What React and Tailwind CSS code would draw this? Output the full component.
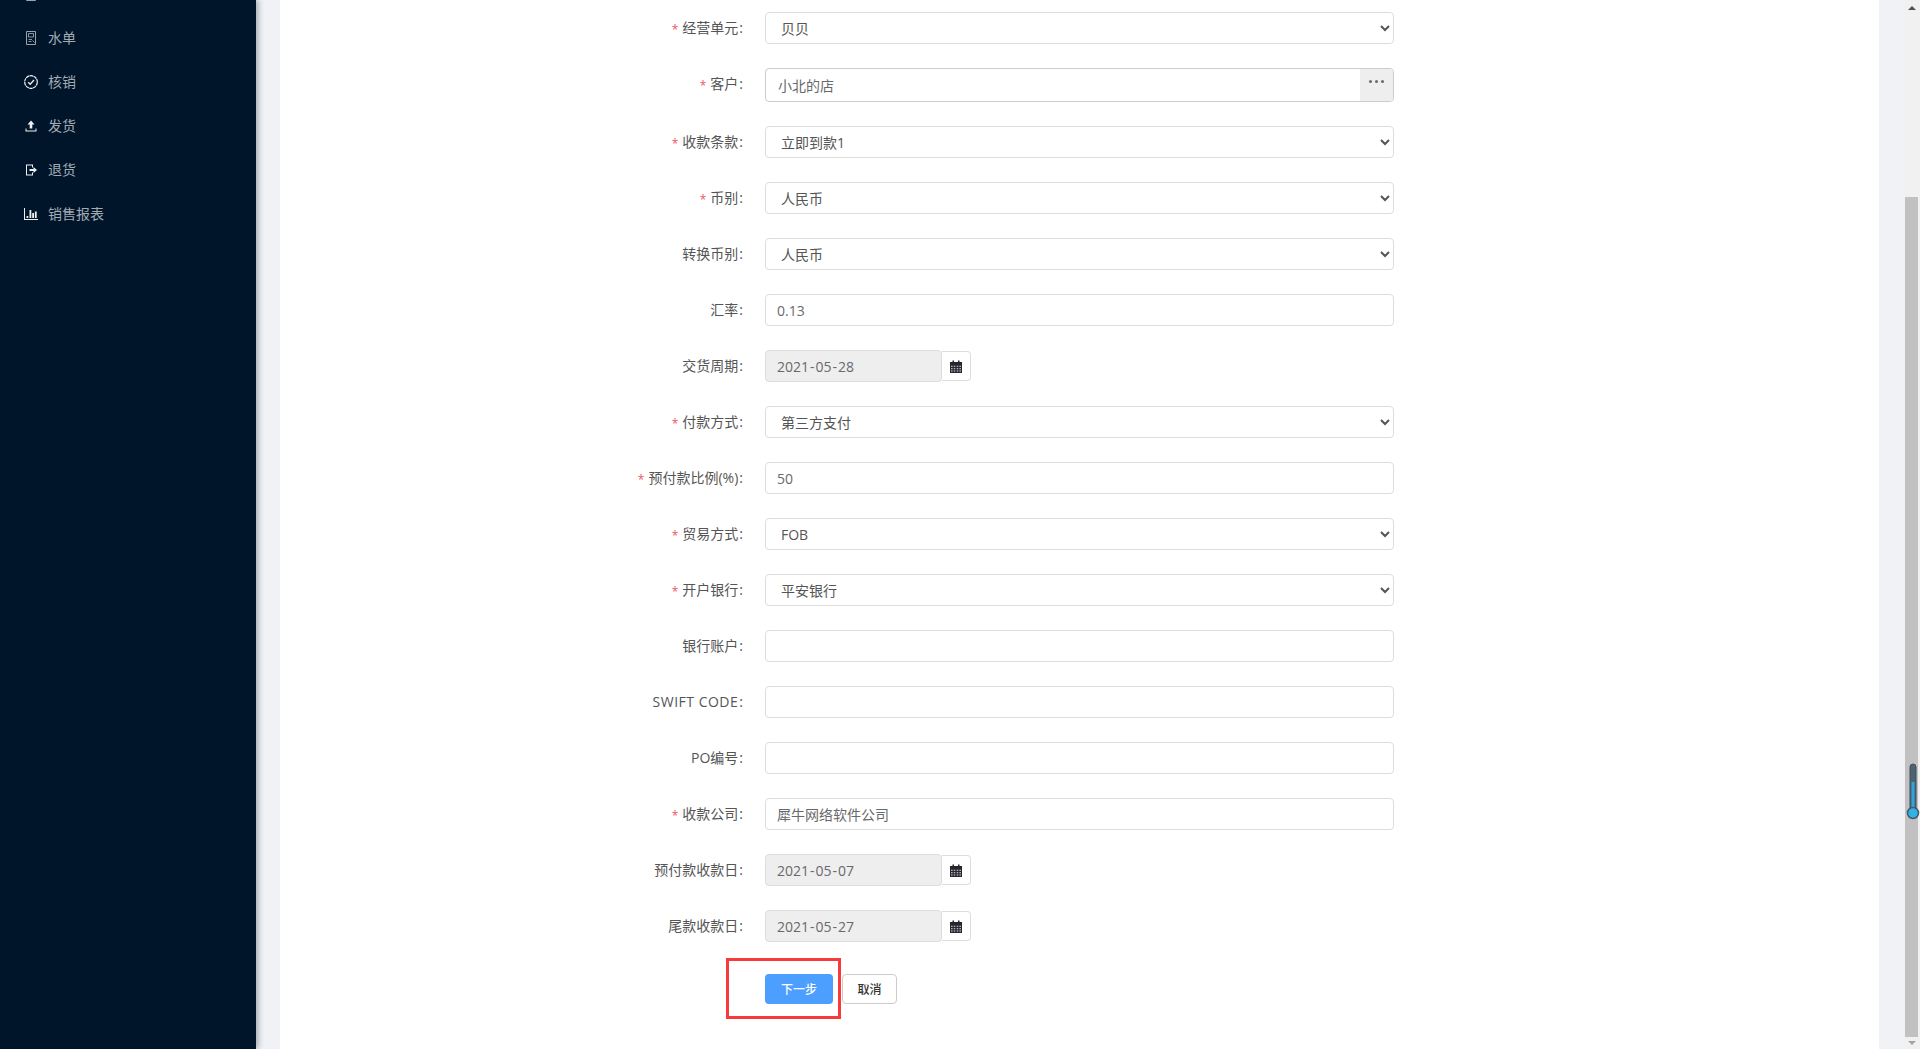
import React from "react";

const font = "font-['Open_Sans','Noto_Sans_CJK_SC',sans-serif]";

const IconBill = () => (
  <svg width="14" height="14" viewBox="0 0 14 14" fill="none" stroke="currentColor">
    <path d="M2.500 .5h9v13h-9z" />
    <path d="M4.500 2.500h5v3.500h-5z" strokeWidth=".9" />
    <path d="M4.500 8.500h3.500M4.500 10.500h3M8.500 9.500l2 2" strokeWidth=".9" />
  </svg>
);
const IconCheck = () => (
  <svg width="14" height="14" viewBox="0 0 14 14" fill="none" stroke="currentColor">
    <circle cx="7" cy="7" r="6.300" strokeWidth="1.200" strokeDasharray="3.500 .45" />
    <path d="M4.200 7.200 6.200 9.200 10 5" strokeWidth="1.300" />
  </svg>
);
const IconUpload = () => (
  <svg width="14" height="14" viewBox="0 0 14 14" fill="currentColor">
    <path d="M7 1.500 10.500 5.500H8.300V9.500H5.700V5.500H3.500Z" />
    <path d="M1.500 9.500v3h11v-3h-1v2h-9v-2z" />
  </svg>
);
const IconOut = () => (
  <svg width="14" height="14" viewBox="0 0 14 14" fill="currentColor">
    <path d="M2 1.500h7v3H8v-2H3v9h5v-2h1v3H2z" />
    <path d="M5.500 6h4V4l3.500 3-3.500 3V8h-4z" />
  </svg>
);
const IconChart = () => (
  <svg width="14" height="14" viewBox="0 0 14 14" fill="currentColor">
    <path d="M0 1h1v11h13v1H0z" />
    <path d="M2.500 9h1.800v2H2.500zM5.500 3h1.800v8H5.500zM8.200 6h1.800v5H8.200zM10.900 4.500h1.800V11h-1.800z" />
  </svg>
);
const IconCalendar = () => (
  <svg width="12" height="13" viewBox="0 0 12 13">
    <path d="M2.500 .5h1.500v1.500h4V.5h1.500v1.500H12V13H0V2h2.500z" fill="#26262f" />
    <path
      d="M1 5.800h1.600v1H1zM3.700 5.800h1.600v1H3.700zM6.700 5.800h1.600v1H6.700zM9.400 5.800h1.600v1H9.400zM1 8.200h1.600v1H1zM3.700 8.200h1.600v1H3.700zM6.700 8.200h1.600v1H6.700zM9.400 8.200h1.600v1H9.400zM1 10.600h1.600v1H1zM3.700 10.600h1.600v1H3.700zM6.700 10.600h1.600v1H6.700zM9.400 10.600h1.600v1H9.400z"
      fill="#d8d8de"
    />
  </svg>
);

const menu = [
  { label: "", icon: <IconBill />, tone: "text-[#9aa4ae]" },
  { label: "水单", icon: <IconBill />, tone: "text-[#9aa4ae]" },
  { label: "核销", icon: <IconCheck />, tone: "text-[#eef0f2]" },
  { label: "发货", icon: <IconUpload />, tone: "text-[#eef0f2]" },
  { label: "退货", icon: <IconOut />, tone: "text-[#eef0f2]" },
  { label: "销售报表", icon: <IconChart />, tone: "text-[#eef0f2]" },
];

const rows = [
  { label: "经营单元", req: true, type: "select", value: "贝贝" },
  { label: "客户", req: true, type: "picker", value: "小北的店" },
  { label: "收款条款", req: true, type: "select", value: "立即到款1" },
  { label: "币别", req: true, type: "select", value: "人民币" },
  { label: "转换币别", type: "select", value: "人民币" },
  { label: "汇率", type: "input", value: "0.13" },
  { label: "交货周期", type: "date", value: ["2021", "05", "28"] },
  { label: "付款方式", req: true, type: "select", value: "第三方支付" },
  { label: "预付款比例(%)", req: true, type: "input", value: "50" },
  { label: "贸易方式", req: true, type: "select", value: "FOB" },
  { label: "开户银行", req: true, type: "select", value: "平安银行" },
  { label: "银行账户", type: "input", value: "" },
  { label: "SWIFT CODE", type: "input", value: "", wide: true },
  { label: "PO编号", type: "input", value: "" },
  { label: "收款公司", req: true, type: "input", value: "犀牛网络软件公司" },
  { label: "预付款收款日", type: "date", value: ["2021", "05", "07"] },
  { label: "尾款收款日", type: "date", value: ["2021", "05", "27"] },
];

function Control({ row }) {
  if (row.type === "select") {
    return (
      <select
        defaultValue={row.value}
        className="w-[629px] h-8 rounded border border-[#dddddd] bg-white pl-[11px] pr-3 text-sm text-[#555555] outline-none"
      >
        <option value={row.value}>{row.value}</option>
      </select>
    );
  }
  if (row.type === "picker") {
    return (
      <div className="flex w-[629px] h-[34px] rounded border border-[#cccccc] overflow-hidden">
        <div className="flex-1 flex items-center pl-3 pt-[2px] text-sm text-[#676a6c]">{row.value}</div>
        <div className="w-[33px] bg-[#eeeeee] flex justify-center gap-[3px] pt-[11px]">
          <span className="w-[3px] h-[3px] rounded-full bg-[#666c75]" />
          <span className="w-[3px] h-[3px] rounded-full bg-[#666c75]" />
          <span className="w-[3px] h-[3px] rounded-full bg-[#666c75]" />
        </div>
      </div>
    );
  }
  if (row.type === "date") {
    return (
      <div className="flex items-center">
        <div className="w-[177px] h-8 rounded border border-[#dddddd] bg-[#eeeeee] flex items-center pl-[11px] pt-px text-sm text-[#676a6c]">
          <span>{row.value[0]}</span>
          <span className="mx-[1px]">-</span>
          <span>{row.value[1]}</span>
          <span className="mx-[1px]">-</span>
          <span>{row.value[2]}</span>
        </div>
        <div className="w-[29px] h-[30px] rounded-r border border-l-0 border-[#dddddd] bg-white flex items-center justify-center">
          <IconCalendar />
        </div>
      </div>
    );
  }
  return (
    <input
      readOnly
      value={row.value}
      className="w-[629px] h-8 rounded border border-[#dddddd] bg-white px-[11px] text-sm text-[#676a6c] outline-none"
    />
  );
}

function Row({ row }) {
  return (
    <div className="flex items-start mb-6">
      <label className="w-[485px] h-8 shrink-0 pr-[22px] flex items-center justify-end text-sm text-[#555555]">
        {row.req && <span className="text-[#ed5565] mr-1 mt-1 text-xs">*</span>}
        <span className={row.wide ? "tracking-[0.5px]" : ""}>{row.label}</span>
        <span className="ml-px">:</span>
      </label>
      <Control row={row} />
    </div>
  );
}

export default function App() {
  return (
    <div className={`${font} flex h-[1049px] w-[1920px] overflow-hidden bg-[#f0f2f5]`}>
      <aside className="w-[256px] shrink-0 bg-[#001529] shadow-[2px_0_6px_rgba(0,21,41,0.35)] overflow-hidden relative z-10">
        <nav className="-mt-[28px] flex flex-col">
          {menu.map((m, i) => (
            <div key={i} className="h-11 pl-6 flex items-center gap-[10px] text-sm text-[#a3abb4]">
              <span className={`w-[14px] h-[14px] flex items-center ${m.tone}`}>{m.icon}</span>
              <span>{m.label}</span>
            </div>
          ))}
        </nav>
      </aside>

      <main className="ml-6 w-[1599px] shrink-0 bg-white pt-3 relative">
        {rows.map((r) => (
          <Row key={r.label} row={r} />
        ))}
        <div className="flex gap-[9px] pl-[485px] mt-8">
          <button className="w-[68px] h-[30px] pt-px rounded bg-[#4c9eff] text-white text-xs font-medium">下一步</button>
          <button className="w-[55px] h-[30px] pt-px rounded border border-[#cccccc] bg-white text-[#333333] text-xs font-medium">取消</button>
        </div>
        <div className="absolute left-[446px] top-[958px] w-[115px] h-[61px] border-[3px] border-[#f93a3a]" />
      </main>

      <div className="w-6 shrink-0" />

      <div className="w-[17px] shrink-0 bg-[#f1f1f1] flex flex-col items-center relative">
        <div className="h-[15px] flex items-center justify-center">
          <div className="w-0 h-0 border-x-[4px] border-x-transparent border-b-[4px] border-b-[#505050]" />
        </div>
        <div className="mt-[182px] w-[13px] h-[840px] bg-[#c1c1c1]" />
        <div className="flex-1 flex items-center justify-center">
          <div className="w-0 h-0 border-x-[4px] border-x-transparent border-t-[4px] border-t-[#a3a3a3]" />
        </div>
        <svg className="absolute left-[3px] top-[762px]" width="14" height="62" viewBox="0 0 14 62">
          <rect x="4" y="2" width="6" height="50" rx="3" fill="#4f6272" stroke="#3f4f5c" />
          <rect x="5.500" y="20" width="3" height="34" fill="#2aa7e0" />
          <circle cx="7" cy="51" r="5.500" fill="#2fb2e6" stroke="#46596a" strokeWidth="1.500" />
        </svg>
      </div>
    </div>
  );
}
